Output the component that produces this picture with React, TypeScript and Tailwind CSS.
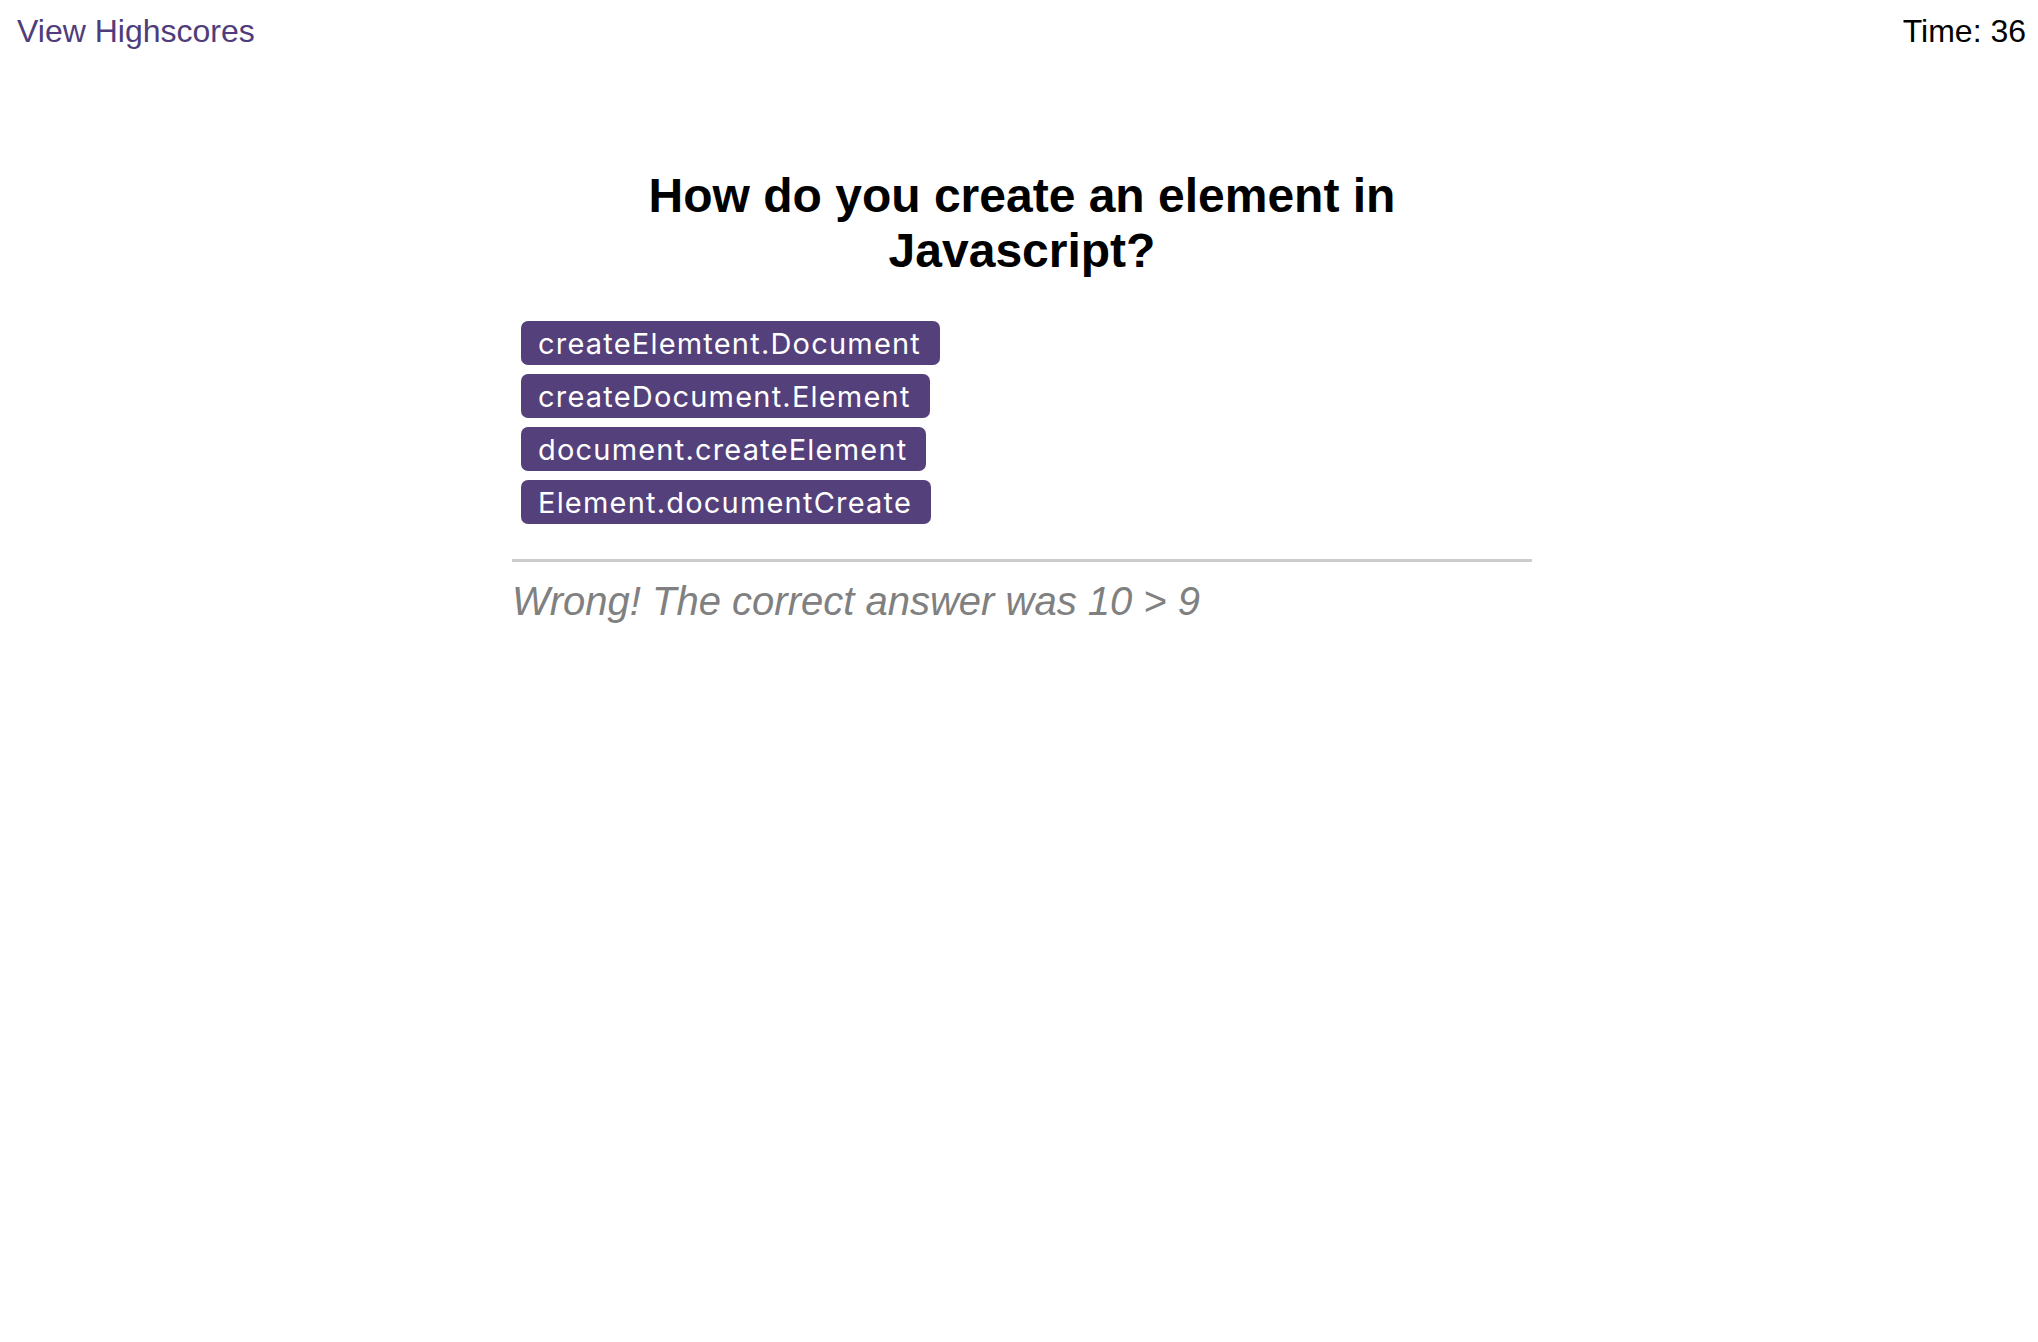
const answers = [
  "createElemtent.Document",
  "createDocument.Element",
  "document.createElement",
  "Element.documentCreate",
];

export default function App() {
  return (
    <div className="min-h-screen bg-white font-['Liberation_Sans',Arial,sans-serif] text-black">
      {/* header */}
      <header className="flex items-start justify-between pl-[17px] pr-[12px] pt-[13px] text-[32px] leading-[37px]">
        <a href="#" className="text-[#4f3d7b]">
          View Highscores
        </a>
        <div>Time: 36</div>
      </header>

      {/* quiz */}
      <main className="ml-[512px] w-[1020px]">
        <h2 className="mt-[118px] text-center text-[48px] font-bold leading-[55px]">
          How do you create an element in Javascript?
        </h2>

        <div className="mt-[43px] flex flex-col items-start gap-[9px] pl-[9px]">
          {answers.map((a) => (
            <button
              key={a}
              className="flex h-[44px] items-center rounded-[7px] bg-[#54407b] pl-[17px] pr-[19px] pt-[2px] font-['Inter',sans-serif] text-[29px] tracking-[1.2px] text-white"
            >
              {a}
            </button>
          ))}
        </div>

        <div className="mt-[35px] h-[3px] bg-[#cccccc]" />

        <p className="mt-[16px] text-[40px] italic leading-[46px] text-[#808080]">
          Wrong! The correct answer was 10 &gt; 9
        </p>
      </main>
    </div>
  );
}
